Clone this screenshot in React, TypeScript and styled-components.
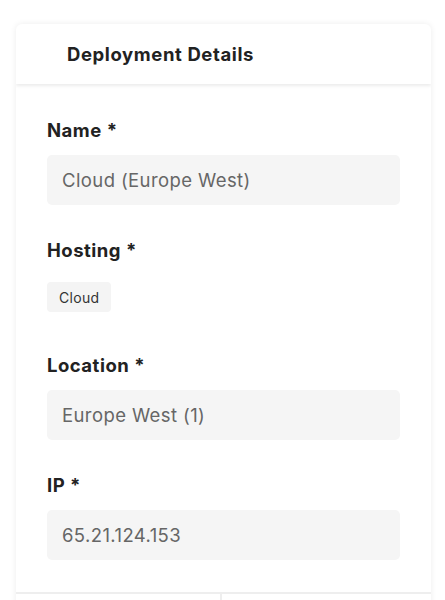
import styled, { createGlobalStyle } from 'styled-components'

const Global = createGlobalStyle`
  body {
    margin: 0;
    background: #fff;
    font-family: Inter, "Noto Sans", sans-serif;
    color: #222;
  }
`

const Page = styled.div`
  padding: 24px 14px 0 16px;
`

const Card = styled.div`
  border-radius: 6px;
  background: #fff;
  box-shadow: 0 0 6px rgba(0, 0, 0, 0.08);
  overflow: hidden;
`

const Header = styled.div`
  height: 60px;
  display: flex;
  align-items: center;
  padding-left: 51px;
  box-shadow: 0 2px 3px rgba(0, 0, 0, 0.08);
  font-size: 18.5px;
  font-weight: 700;
  letter-spacing: 0.6px;
  color: #222;
`

const Body = styled.div`
  padding: 34px 31px 32px;
  display: flex;
  flex-direction: column;
  gap: 33px;
`

const Field = styled.div`
  display: flex;
  flex-direction: column;
  gap: 13px;
`

const Label = styled.label`
  font-size: 18.5px;
  font-weight: 700;
  letter-spacing: 0.5px;
  line-height: 24px;
  color: #222;
`

const Input = styled.div`
  height: 50px;
  border-radius: 5px;
  background: #f5f5f5;
  display: flex;
  align-items: center;
  padding: 0 15px;
  font-size: 18.5px;
  letter-spacing: 0.4px;
  color: #666;
`

const Chip = styled.span`
  align-self: flex-start;
  margin-top: 7px;
  margin-bottom: 8px;
  height: 30px;
  padding: 0 12px;
  border-radius: 4px;
  background: #f4f4f4;
  display: flex;
  align-items: center;
  font-size: 14px;
  letter-spacing: 0.3px;
  color: #333;
`

const Footer = styled.div`
  display: grid;
  grid-template-columns: 206px 1fr;
  height: 40px;
  border-top: 2px solid #eee;
`

const FooterCell = styled.div<{ $divider?: boolean }>`
  border-right: ${p => (p.$divider ? '2px solid #eee' : 'none')};
`

const fields = [
  { label: 'Name *', value: 'Cloud (Europe West)' },
  { label: 'Location *', value: 'Europe West (1)' },
  { label: 'IP *', value: '65.21.124.153' },
]

export default function App() {
  return (
    <>
      <Global />
      <Page>
        <Card>
          <Header>Deployment Details</Header>
          <Body>
            <Field>
              <Label>{fields[0].label}</Label>
              <Input>{fields[0].value}</Input>
            </Field>
            <Field>
              <Label>Hosting *</Label>
              <Chip>Cloud</Chip>
            </Field>
            {fields.slice(1).map(f => (
              <Field key={f.label}>
                <Label>{f.label}</Label>
                <Input>{f.value}</Input>
              </Field>
            ))}
          </Body>
          <Footer>
            <FooterCell $divider />
            <FooterCell />
          </Footer>
        </Card>
      </Page>
    </>
  )
}
